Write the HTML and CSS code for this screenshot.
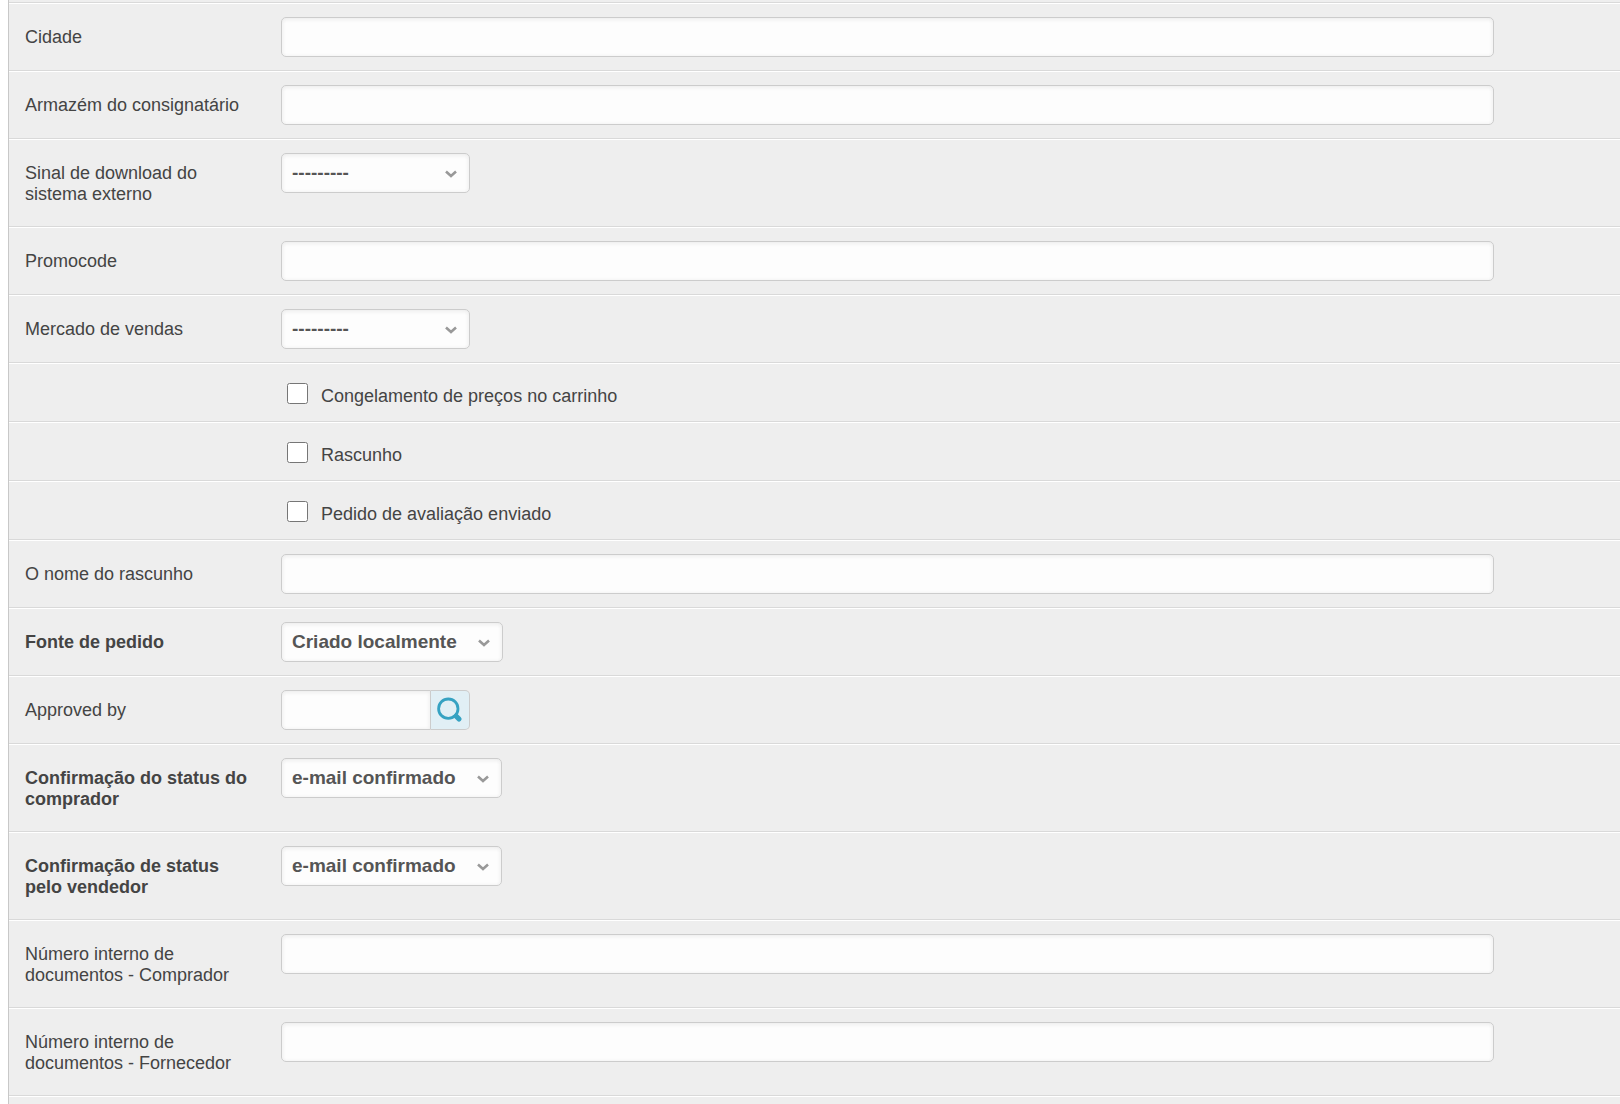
FILE: index.html
```html
<!DOCTYPE html>
<html lang="pt">
<head>
  <meta charset="UTF-8">
  <meta name="viewport" content="width=device-width, initial-scale=1.0">
  <title>Pedido</title>
  <link rel="stylesheet" href="styles.css">
</head>
<body>
  <form class="module">
    <div class="row row-edge"></div>
    <div class="row">
      <label class="label" for="city">Cidade</label>
      <div class="field"><input type="text" class="text-input" id="city"></div>
    </div>
    <div class="row">
      <label class="label" for="warehouse">Armazém do consignatário</label>
      <div class="field"><input type="text" class="text-input" id="warehouse"></div>
    </div>
    <div class="row">
      <label class="label" for="download">Sinal de download do sistema externo</label>
      <div class="field">
        <select class="select" id="download"><option>---------</option></select>
      </div>
    </div>
    <div class="row">
      <label class="label" for="promocode">Promocode</label>
      <div class="field"><input type="text" class="text-input" id="promocode"></div>
    </div>
    <div class="row">
      <label class="label" for="market">Mercado de vendas</label>
      <div class="field">
        <select class="select" id="market"><option>---------</option></select>
      </div>
    </div>
    <div class="row row-check">
      <input type="checkbox" class="checkbox" id="freeze">
      <label for="freeze">Congelamento de preços no carrinho</label>
    </div>
    <div class="row row-check">
      <input type="checkbox" class="checkbox" id="draft">
      <label for="draft">Rascunho</label>
    </div>
    <div class="row row-check">
      <input type="checkbox" class="checkbox" id="review">
      <label for="review">Pedido de avaliação enviado</label>
    </div>
    <div class="row">
      <label class="label" for="draft-name">O nome do rascunho</label>
      <div class="field"><input type="text" class="text-input" id="draft-name"></div>
    </div>
    <div class="row">
      <label class="label required" for="source">Fonte de pedido</label>
      <div class="field">
        <select class="select" id="source"><option>Criado localmente</option></select>
      </div>
    </div>
    <div class="row">
      <label class="label" for="approved">Approved by</label>
      <div class="field lookup">
        <input type="text" class="text-input lookup-input" id="approved">
        <button type="button" class="lookup-button" aria-label="Approved by">
          <svg width="26" height="26" viewBox="0 0 26 26">
            <circle cx="11.3" cy="11.7" r="9.7" fill="none" stroke="#36a2c2" stroke-width="2.8"/>
            <path d="M17.5 17.5L19 19" stroke="#36a2c2" stroke-width="4"/>
            <path d="M19.5 19.5L22 22" stroke="#36a2c2" stroke-width="5.2" stroke-linecap="round"/>
          </svg>
        </button>
      </div>
    </div>
    <div class="row">
      <label class="label required" for="buyer-status">Confirmação do status do comprador</label>
      <div class="field">
        <select class="select" id="buyer-status"><option>e-mail confirmado</option></select>
      </div>
    </div>
    <div class="row">
      <label class="label required" for="seller-status">Confirmação de status pelo vendedor</label>
      <div class="field">
        <select class="select" id="seller-status"><option>e-mail confirmado</option></select>
      </div>
    </div>
    <div class="row">
      <label class="label" for="buyer-number">Número interno de documentos - Comprador</label>
      <div class="field"><input type="text" class="text-input" id="buyer-number"></div>
    </div>
    <div class="row">
      <label class="label" for="seller-number">Número interno de documentos - Fornecedor</label>
      <div class="field"><input type="text" class="text-input" id="seller-number"></div>
    </div>
    <div class="row-rest"></div>
  </form>
</body>
</html>
```
FILE: styles.css
```css
* {
  box-sizing: border-box;
}

body {
  margin: 0;
  padding-left: 8px;
  background-color: #fff;
  color: #444;
  font-family: "Liberation Sans", Arial, sans-serif;
  font-size: 18px;
  line-height: 21px;
}

.module {
  display: flex;
  flex-direction: column;
  min-height: 100vh;
  border-left: 1px solid #c8c8c8;
  background-color: #eee;
}

.row {
  display: flex;
  align-items: flex-start;
  padding: 13px 126px 13px 16px;
  border-top: 1px solid #fff;
  border-bottom: 1px solid #d9d9d9;
}

.row-edge {
  height: 3px;
  padding: 0;
  border-top: none;
}

.row-rest {
  flex: 1;
  border-top: 1px solid #fff;
}

.label {
  width: 226px;
  margin-right: 30px;
  padding: 10px 0 8px;
}

.required {
  font-weight: bold;
}

.field {
  display: flex;
  flex: 1;
}

.text-input,
.select {
  height: 40px;
  padding: 0 10px;
  border: 1px solid #ccc;
  border-radius: 5px;
  background-color: #fdfdfd;
  box-shadow: inset 0 1px 4px #e8e8e8;
  color: #555;
  font-family: inherit;
  font-size: 19px;
  font-weight: bold;
}

.text-input {
  width: 100%;
}

.select {
  appearance: none;
  min-width: 189px;
  padding: 0 45px 2px 10px;
  background-image: url("data:image/svg+xml,%3Csvg xmlns='http://www.w3.org/2000/svg' width='12' height='8'%3E%3Cpath d='M1 1.5L6 6L11 1.5' fill='none' stroke='%23999' stroke-width='2.6'/%3E%3C/svg%3E");
  background-repeat: no-repeat;
  background-position: right 12px top 16px;
}

.row-check {
  gap: 13px;
  padding: 19px 126px 17px 278px;
}

.row-check label {
  padding-top: 5px;
  line-height: 16px;
}

.checkbox {
  width: 21px;
  height: 21px;
  margin: 0;
}

.lookup-input {
  width: 150px;
  border-radius: 5px 0 0 5px;
}

.lookup-button {
  display: flex;
  align-items: center;
  justify-content: center;
  width: 39px;
  height: 40px;
  padding: 0;
  border: 1px solid #ccc;
  border-left: none;
  border-radius: 0 5px 5px 0;
  background-color: #e1eff5;
  cursor: pointer;
}
```
